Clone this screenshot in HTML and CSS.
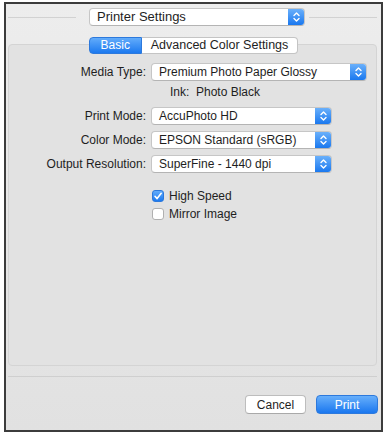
FILE: index.html
```html
<!DOCTYPE html>
<html lang="en">
<head>
    <meta charset="UTF-8">
    <meta name="viewport" content="width=device-width, initial-scale=1.0">
    <title>Print</title>
    <link rel="stylesheet" href="styles.css">
</head>
<body>
    <div class="window">
        <div class="header">
            <span class="rule"></span>
            <div class="popup popup-header">
                <span class="popup-text">Printer Settings</span>
                <span class="stepper"><svg width="15" height="16" viewBox="0 0 15 16"><path d="M5 6.5 L7.5 4 L10 6.5 M5 9.5 L7.5 12 L10 9.5" fill="none" stroke="#fff" stroke-width="1.4" stroke-linecap="round" stroke-linejoin="round"/></svg></span>
            </div>
            <span class="rule"></span>
        </div>

        <div class="tabs">
            <span class="tab active">Basic</span>
            <span class="tab">Advanced Color Settings</span>
        </div>

        <div class="panel">
            <div class="form">
                <label>Media Type:</label>
                <div class="popup popup-wide">
                    <span class="popup-text">Premium Photo Paper Glossy</span>
                    <span class="stepper"><svg width="15" height="16" viewBox="0 0 15 16"><path d="M5 6.5 L7.5 4 L10 6.5 M5 9.5 L7.5 12 L10 9.5" fill="none" stroke="#fff" stroke-width="1.4" stroke-linecap="round" stroke-linejoin="round"/></svg></span>
                </div>

                <span></span>
                <div class="ink">Ink:&nbsp; Photo Black</div>

                <label>Print Mode:</label>
                <div class="popup">
                    <span class="popup-text">AccuPhoto HD</span>
                    <span class="stepper"><svg width="15" height="16" viewBox="0 0 15 16"><path d="M5 6.5 L7.5 4 L10 6.5 M5 9.5 L7.5 12 L10 9.5" fill="none" stroke="#fff" stroke-width="1.4" stroke-linecap="round" stroke-linejoin="round"/></svg></span>
                </div>

                <label>Color Mode:</label>
                <div class="popup">
                    <span class="popup-text">EPSON Standard (sRGB)</span>
                    <span class="stepper"><svg width="15" height="16" viewBox="0 0 15 16"><path d="M5 6.5 L7.5 4 L10 6.5 M5 9.5 L7.5 12 L10 9.5" fill="none" stroke="#fff" stroke-width="1.4" stroke-linecap="round" stroke-linejoin="round"/></svg></span>
                </div>

                <label>Output Resolution:</label>
                <div class="popup">
                    <span class="popup-text">SuperFine - 1440 dpi</span>
                    <span class="stepper"><svg width="15" height="16" viewBox="0 0 15 16"><path d="M5 6.5 L7.5 4 L10 6.5 M5 9.5 L7.5 12 L10 9.5" fill="none" stroke="#fff" stroke-width="1.4" stroke-linecap="round" stroke-linejoin="round"/></svg></span>
                </div>

                <span></span>
                <div class="checks">
                    <div class="check-row">
                        <span class="checkbox checked"><svg width="12" height="12" viewBox="0 0 12 12"><path d="M3 6.3 L5.1 8.6 L9.2 3.3" fill="none" stroke="#fff" stroke-width="1.6" stroke-linecap="round" stroke-linejoin="round"/></svg></span>
                        High Speed
                    </div>
                    <div class="check-row">
                        <span class="checkbox"></span>
                        Mirror Image
                    </div>
                </div>
            </div>
        </div>

        <div class="separator"></div>

        <div class="buttons">
            <button class="btn">Cancel</button>
            <button class="btn btn-primary">Print</button>
        </div>
    </div>
</body>
</html>
```

FILE: styles.css
```css
body {
    margin: 0;
    background: #fff;
    font-family: "Liberation Sans", Arial, sans-serif;
    font-size: 12px;
    color: #1e1e1e;
}
.window {
    width: 375px;
    height: 426px;
    margin: 2px 0 0 4px;
    border: 2px solid #3c3c3c;
    background: linear-gradient(#ededed, #e1e1e1);
    display: flex;
    flex-direction: column;
}
.header {
    display: flex;
    align-items: center;
    padding: 4px 4px 0 2px;
}
.rule {
    flex: 1;
    height: 1px;
    background: #d2d2d2;
}
.popup {
    display: flex;
    align-items: stretch;
    width: 181px;
    height: 18px;
    box-sizing: border-box;
    border: 1px solid #c6c6c6;
    border-bottom-color: #b4b4b4;
    border-radius: 4px;
    background: #fff;
    overflow: hidden;
}
.popup-header {
    width: 216px;
    margin: 0 4px 0 13px;
    font-size: 13px;
}
.popup-wide {
    width: 216px;
}
.popup-text {
    flex: 1;
    padding-left: 7px;
    line-height: 16px;
    white-space: nowrap;
}
.stepper {
    width: 16px;
    background: linear-gradient(#6ab0fb, #1a78ef);
    display: flex;
    align-items: center;
    justify-content: center;
}
.tabs {
    display: flex;
    justify-content: center;
    margin: 11px 0 -10px 0;
    position: relative;
    z-index: 1;
}
.tab {
    height: 17px;
    box-sizing: border-box;
    padding: 0 9px;
    line-height: 15px;
    font-size: 12.5px;
    background: #fff;
    border: 1px solid #c4c4c4;
    border-left: none;
    border-radius: 0 4px 4px 0;
}
.tab.active {
    width: 53px;
    text-align: center;
    padding: 0;
    color: #fff;
    font-size: 12px;
    background: linear-gradient(#62acfb, #1c79ef);
    border: 1px solid #2d79dc;
    border-radius: 4px 0 0 4px;
}
.panel {
    height: 322px;
    box-sizing: border-box;
    margin: 0 4px 0 2px;
    background: #e2e2e2;
    border: 1px solid #d4d4d4;
    border-radius: 4px;
    padding-top: 18px;
}
.form {
    display: grid;
    grid-template-columns: 137px auto;
    column-gap: 5px;
    row-gap: 6px;
    align-items: center;
}
.form label {
    text-align: right;
    white-space: nowrap;
}
.ink {
    padding: 0 0 3px 19px;
    line-height: 11px;
}
.checks {
    margin-top: 8px;
}
.check-row {
    display: flex;
    align-items: center;
    height: 18px;
    gap: 5px;
    padding-left: 1px;
}
.checkbox {
    width: 12px;
    height: 12px;
    box-sizing: border-box;
    border: 1px solid #b0b0b0;
    border-radius: 3px;
    background: #fff;
    display: flex;
}
.checkbox.checked {
    border-color: #2d79dc;
    background: linear-gradient(#62acfb, #1c79ef);
}
.checkbox svg {
    margin: -1px;
}
.separator {
    height: 1px;
    margin: 10px 4px 0 2px;
    background: #cfcfcf;
}
.buttons {
    display: flex;
    justify-content: flex-end;
    gap: 10px;
    margin: 18px 3px 0 0;
}
.btn {
    width: 61px;
    height: 19px;
    padding: 0;
    font-family: inherit;
    font-size: 12px;
    color: #1e1e1e;
    background: #fff;
    border: 1px solid #bdbdbd;
    border-bottom-color: #a9a9a9;
    border-radius: 4px;
}
.btn-primary {
    width: 62px;
    color: #fff;
    background: linear-gradient(#67affb, #1a77ef);
    border-color: #2d79dc;
}
```
